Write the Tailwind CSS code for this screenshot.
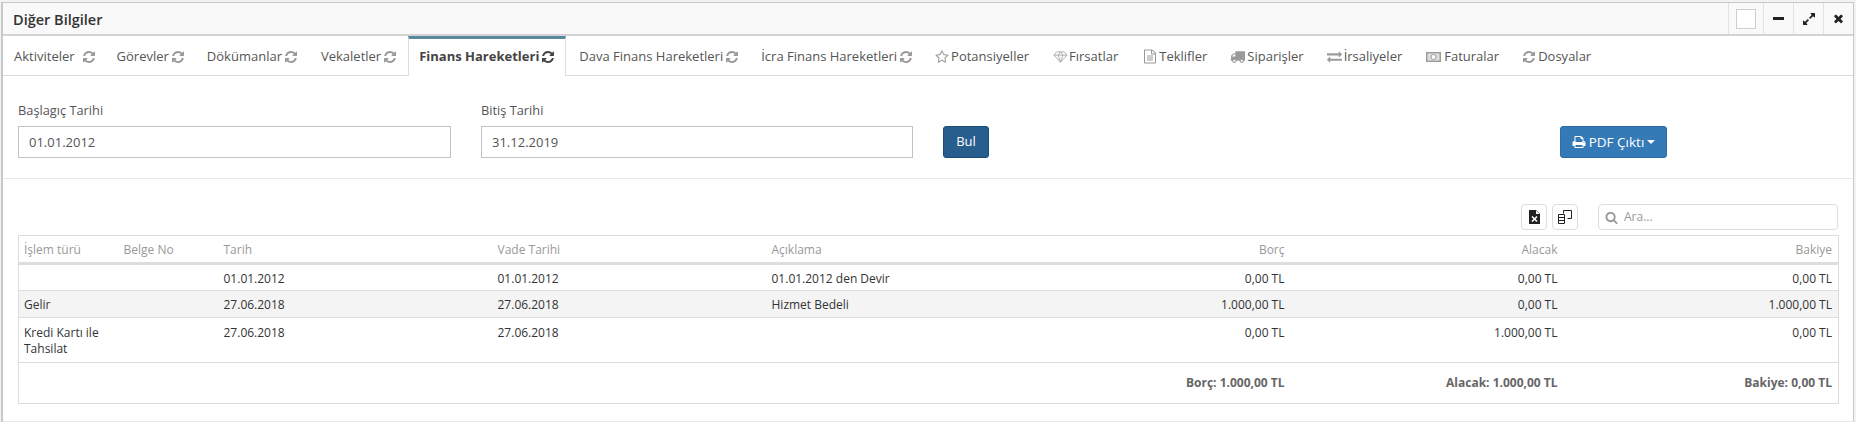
<!DOCTYPE html>
<html lang="en">

<head>
    <meta charset="UTF-8">
    <title>Diğer Bilgiler</title>
    <script src="https://cdn.jsdelivr.net/npm/@tailwindcss/browser@4"></script>
</head>

<body class="bg-[#f2f2f2] font-['Open_Sans',sans-serif] text-[13px] text-[#333] overflow-hidden">
    <svg class="hidden">
        <symbol id="refresh" viewBox="0 0 1792 1792"><path fill="currentColor" d="M1639 1056q0 5-1 7-64 268-268 434.5t-478 166.5q-146 0-282.5-55t-243.5-157l-129 129q-19 19-45 19t-45-19-19-45v-448q0-26 19-45t45-19h448q26 0 45 19t19 45-19 45l-137 137q71 66 161 102t187 36q134 0 250-65t186-179q11-17 53-117 8-23 30-23h192q13 0 22.5 9.5t9.5 22.5zm25-800v448q0 26-19 45t-45 19h-448q-26 0-45-19t-19-45 19-45l138-138q-148-137-349-137-134 0-250 65t-186 179q-11 17-53 117-8 23-30 23h-199q-13 0-22.5-9.5t-9.5-22.5v-7q65-268 270-434.5t480-166.5q146 0 284 55.5t245 156.5l130-129q19-19 45-19t45 19 19 45z"/></symbol>
    </svg>

    <div class="mt-[2px] ml-[1px] mr-[2px] h-[420px] bg-white border border-l-2 border-[#c9c9c9] border-b-0">
        <!-- title bar -->
        <div class="flex h-[33px] items-stretch justify-between bg-[#f9f9f9] border-b-2 border-[#d4d4d4]">
            <div class="pl-[10px] leading-[33px] text-[14.5px] font-semibold text-[#333]">Diğer Bilgiler</div>
            <div class="flex text-[#222]">
                <div class="flex w-[35px] items-center justify-center border-l border-[#e2e2e2]">
                    <div class="w-[20px] h-[20px] bg-white border border-[#cfcfcf]"></div>
                </div>
                <div class="flex w-[30px] items-center justify-center border-l border-[#e2e2e2]">
                    <div class="w-[11px] h-[3px] bg-[#222]"></div>
                </div>
                <div class="flex w-[30px] items-center justify-center border-l border-[#e2e2e2]">
                    <svg class="w-[14px] h-[14px]" viewBox="0 0 1792 1792"><path fill="currentColor" d="M883 1056q0 13-10 23l-332 332 144 144q19 19 19 45t-19 45-45 19h-448q-26 0-45-19t-19-45v-448q0-26 19-45t45-19 45 19l144 144 332-332q10-10 23-10t23 10l114 114q10 10 10 23zm781-864v448q0 26-19 45t-45 19-45-19l-144-144-332 332q-10 10-23 10t-23-10l-114-114q-10-10-10-23t10-23l332-332-144-144q-19-19-19-45t19-45 45-19h448q26 0 45 19t19 45z"/></svg>
                </div>
                <div class="flex w-[30px] items-center justify-center border-l border-[#e2e2e2]">
                    <svg class="w-[13px] h-[13px]" viewBox="0 0 1792 1792"><path fill="currentColor" d="M1490 1322q0 40-28 68l-136 136q-28 28-68 28t-68-28l-294-294-294 294q-28 28-68 28t-68-28l-136-136q-28-28-28-68t28-68l294-294-294-294q-28-28-28-68t28-68l136-136q28-28 68-28t68 28l294 294 294-294q28-28 68-28t68 28l136 136q28 28 28 68t-28 68l-294 294 294 294q28 28 28 68z"/></svg>
                </div>
            </div>
        </div>

        <!-- tabs -->
        <div class="flex h-[40px] items-stretch border-b border-[#ddd] text-[#555] text-[13px] whitespace-nowrap">
            <a class="flex items-center gap-[7px] pt-[2px] pl-[11px] pr-[10px]">Aktiviteler <svg class="w-[14px] h-[14px] text-[#9a9a9a]"><use href="#refresh"/></svg></a>
            <a class="flex items-center gap-[2px] pt-[2px] px-[11px]">Görevler <svg class="w-[14px] h-[14px] text-[#9a9a9a]"><use href="#refresh"/></svg></a>
            <a class="flex items-center gap-[2px] pt-[2px] pl-[11px] pr-[13px]">Dökümanlar <svg class="w-[14px] h-[14px] text-[#9a9a9a]"><use href="#refresh"/></svg></a>
            <a class="flex items-center gap-[2px] pt-[2px] pl-[10px] pr-[11px]">Vekaletler <svg class="w-[14px] h-[14px] text-[#9a9a9a]"><use href="#refresh"/></svg></a>
            <a class="flex items-center gap-[2px] px-[10px] pb-[1px] -mb-px bg-white border-x border-[#ddd] border-t-[3px] border-t-[#5b8a9e] font-bold text-[#444]">Finans Hareketleri <svg class="w-[14px] h-[14px] text-[#444]"><use href="#refresh"/></svg></a>
            <a class="flex items-center gap-[2px] pt-[2px] pl-[13px] pr-[11px]">Dava Finans Hareketleri <svg class="w-[14px] h-[14px] text-[#9a9a9a]"><use href="#refresh"/></svg></a>
            <a class="flex items-center gap-[2px] pt-[2px] pl-[11px] pr-[10px]">İcra Finans Hareketleri <svg class="w-[14px] h-[14px] text-[#9a9a9a]"><use href="#refresh"/></svg></a>
            <a class="flex items-center gap-[2px] pt-[2px] pl-[12px] pr-[10px]"><svg class="w-[14px] h-[14px] text-[#9a9a9a]" viewBox="0 0 1792 1792"><path fill="currentColor" d="M1201 1004l306-297-422-62-189-382-189 382-422 62 306 297-73 421 378-199 377 199zm527-357q0 22-26 48l-367 358 87 506q1 7 1 20 0 50-41 50-19 0-40-12l-454-239-454 239q-22 12-40 12-21 0-31.5-14.5t-10.5-35.5q0-6 2-20l87-506-368-358q-25-27-25-48 0-37 56-46l507-74 227-460q19-41 49-41t49 41l227 460 507 74q56 9 56 46z"/></svg>Potansiyeller</a>
            <a class="flex items-center gap-[1px] pt-[2px] pl-[14px] pr-[14px]"><svg class="w-[15px] h-[14px] text-[#aaa]" viewBox="0 0 16 14" fill="none" stroke="currentColor"><path d="M4 1.500h8l3 3.500-7 7.500L1 5zM1 5h14M5.500 5 8 12.500 10.500 5 8 1.500z"/></svg>Fırsatlar</a>
            <a class="flex items-center gap-[2px] pt-[2px] pl-[11px] pr-[12px]"><svg class="w-[14px] h-[15px] text-[#9a9a9a]" viewBox="0 0 1792 1792"><path fill="currentColor" d="M1596 380q28 28 48 76t20 88v1152q0 40-28 68t-68 28h-1344q-40 0-68-28t-28-68v-1600q0-40 28-68t68-28h896q40 0 88 20t76 48zm-444-244v376h376q-10-29-22-41l-313-313q-12-12-41-22zm384 1528v-1024h-416q-40 0-68-28t-28-68v-416h-768v1536h1280zm-1024-864q0-14 9-23t23-9h704q14 0 23 9t9 23v64q0 14-9 23t-23 9h-704q-14 0-23-9t-9-23v-64zm736 224q14 0 23 9t9 23v64q0 14-9 23t-23 9h-704q-14 0-23-9t-9-23v-64q0-14 9-23t23-9h704zm0 256q14 0 23 9t9 23v64q0 14-9 23t-23 9h-704q-14 0-23-9t-9-23v-64q0-14 9-23t23-9h704z"/></svg>Teklifler</a>
            <a class="flex items-center gap-[2px] pt-[2px] pl-[11px] pr-[12px]"><svg class="w-[15px] h-[15px] text-[#9a9a9a]" viewBox="0 0 1792 1792"><path fill="currentColor" d="M640 1408q0-52-38-90t-90-38-90 38-38 90 38 90 90 38 90-38 38-90zm-384-512h384v-256h-158q-13 0-22 9l-195 195q-9 9-9 22v30zm1280 512q0-52-38-90t-90-38-90 38-38 90 38 90 90 38 90-38 38-90zm256-1088v1024q0 15-4 26.500t-13.500 18.500-16.500 11.500-23.500 6-22.500 2-25.500 0-22.500-.5q0 106-75 181t-181 75-181-75-75-181h-384q0 106-75 181t-181 75-181-75-75-181h-64q-3 0-22.500.5t-25.500 0-22.500-2-23.500-6-16.500-11.500-13.500-18.500-4-26.500q0-26 19-45t45-19v-320q0-8-.5-35t0-38 2.500-34.500 6.500-37 14-30.500 22.500-30l198-198q19-19 50.500-32t58.500-13h160v-192q0-26 19-45t45-19h1024q26 0 45 19t19 45z"/></svg>Siparişler</a>
            <a class="flex items-center gap-[2px] pt-[2px] pl-[11px] pr-[12px]"><svg class="w-[15px] h-[15px] text-[#9a9a9a]" viewBox="0 0 1792 1792"><path fill="currentColor" d="M1792 1184v192q0 13-9.500 22.500t-22.500 9.500h-1376v192q0 13-9.500 22.500t-22.500 9.500q-12 0-24-10l-319-320q-9-9-9-22 0-14 9-23l320-320q9-9 23-9 13 0 22.500 9.500t9.500 22.500v192h1376q13 0 22.500 9.500t9.500 22.500zm0-544q0 14-9 23l-320 320q-9 9-23 9-13 0-22.500-9.500t-9.500-22.500v-192h-1376q-13 0-22.500-9.500t-9.500-22.500v-192q0-13 9.500-22.500t22.500-9.500h1376v-192q0-14 9-23t23-9q12 0 24 10l319 319q9 9 9 23z"/></svg>İrsaliyeler</a>
            <a class="flex items-center gap-[3px] pt-[2px] pl-[12px] pr-[12px]"><svg class="w-[15px] h-[12px] text-[#9a9a9a]" viewBox="0 0 15 12"><path fill="currentColor" fill-rule="evenodd" d="M0 1h15v10H0zM1.500 2.500v7h12v-7z"/><path fill="currentColor" fill-opacity=".35" d="M1.500 2.500h12v7h-12z"/><circle cx="7.500" cy="6" r="2.500" fill="#fff" stroke="currentColor"/></svg>Faturalar</a>
            <a class="flex items-center gap-[2px] pt-[2px] px-[11px]"><svg class="w-[14px] h-[14px] text-[#9a9a9a]"><use href="#refresh"/></svg>Dosyalar</a>
        </div>

        <!-- date filter -->
        <div class="flex h-[103px] items-start pt-[21px] pl-[15px] border-b border-[#e8e8e8]">
            <div class="w-[433px] shrink-0">
                <label class="block h-[29px] leading-[26px] text-[12.800px] text-[#555]">Başlagıç Tarihi</label>
                <input type="text" value="01.01.2012" class="block w-full h-[32px] px-[10px] border border-[#c2c2c2] text-[13px] text-[#555]">
            </div>
            <div class="w-[432px] shrink-0 ml-[30px]">
                <label class="block h-[29px] leading-[26px] text-[12.800px] text-[#555]">Bitiş Tarihi</label>
                <input type="text" value="31.12.2019" class="block w-full h-[32px] px-[10px] border border-[#c2c2c2] text-[13px] text-[#555]">
            </div>
            <button class="mt-[29px] ml-[30px] w-[46px] h-[32px] rounded-[3px] bg-[#285e8e] border border-[#204d74] text-white">Bul</button>
            <button class="mt-[29px] ml-[571px] flex items-center justify-center gap-[3px] w-[107px] h-[32px] rounded-[3px] bg-[#337ab7] border border-[#2e6da4] text-white text-[13.500px]">
                <svg class="w-[14px] h-[14px]" viewBox="0 0 1792 1792"><path fill="currentColor" d="M448 1536h896v-256h-896v256zm0-640h896v-384h-160q-40 0-68-28t-28-68v-160h-640v640zm1152 64q0-26-19-45t-45-19-45 19-19 45 19 45 45 19 45-19 19-45zm128 0v416q0 13-9.500 22.500t-22.500 9.500h-224v160q0 40-28 68t-68 28h-960q-40 0-68-28t-28-68v-160h-224q-13 0-22.500-9.500t-9.500-22.500v-416q0-79 56.500-135.500t135.500-56.500h64v-544q0-40 28-68t68-28h672q40 0 88 20t76 48l152 152q28 28 48 76t20 88v256h64q79 0 135.500 56.500t56.500 135.500z"/></svg>
                PDF Çıktı
                <span class="w-0 h-0 border-x-[4px] border-x-transparent border-t-[4px] border-t-white"></span>
            </button>
        </div>

        <!-- table area -->
        <div class="pl-[15px] pr-[15px] h-[243px] border-b border-[#e8e8e8]">
            <div class="flex justify-end items-start pt-[25px] h-[51px]">
                <button class="flex items-center justify-center w-[26px] h-[26px] rounded-[4px] border border-[#ddd] bg-white">
                    <svg class="w-[11px] h-[14px]" viewBox="0 0 11 14"><path fill="#222" d="M0 0h7l4 4v10H0z"/><path fill="#fff" d="M7 .5 10.500 4H7z"/><path stroke="#fff" stroke-width="1.600" d="M3 6.500l5 5M8 6.500l-5 5"/></svg>
                </button>
                <button class="flex items-center justify-center w-[26px] h-[26px] ml-[5px] rounded-[4px] border border-[#ddd] bg-white">
                    <svg class="w-[14px] h-[14px]" viewBox="0 0 14 14" fill="none" stroke="#222"><path d="M5.500 3.500v-3h8v8h-4"/><path fill="#fff" d="M.5 4.500h6v9h-6zM.5 7.500h6M.5 10.500h6"/></svg>
                </button>
                <div class="flex items-center gap-[6px] w-[240px] h-[26px] ml-[20px] px-[6px] rounded-[4px] border border-[#ddd] bg-white text-[12px] text-[#999]">
                    <svg class="w-[13px] h-[13px] text-[#999]" viewBox="0 0 1792 1792"><path fill="currentColor" d="M1216 832q0-185-131.500-316.500t-316.500-131.500-316.500 131.500-131.500 316.500 131.500 316.500 316.500 131.500 316.500-131.500 131.500-316.500zm512 832q0 52-38 90t-90 38q-54 0-90-38l-343-342q-179 124-399 124-143 0-273.500-55.500t-225-150-150-225-55.500-273.500 55.500-273.500 150-225 225-150 273.500-55.500 273.500 55.500 225 150 150 225 55.500 273.500q0 220-124 399l343 343q37 37 37 90z"/></svg>
                    Ara...
                </div>
            </div>
            <table class="mt-[5px] w-[1820px] table-fixed border-collapse border border-[#ddd] text-[12px] leading-[16px] text-[#333]">
                <colgroup>
                    <col class="w-[100px]"><col class="w-[100px]"><col class="w-[274px]"><col class="w-[274px]"><col class="w-[252px]"><col class="w-[271px]"><col class="w-[273px]"><col class="w-[276px]">
                </colgroup>
                <thead class="text-[#999]">
                    <tr class="h-[28px] border-b-[3px] border-[#ddd] *:pt-[2px]">
                        <th class="px-[5px] text-left font-normal">İşlem türü</th>
                        <th class="px-[5px] text-left font-normal">Belge No</th>
                        <th class="px-[5px] text-left font-normal">Tarih</th>
                        <th class="px-[5px] text-left font-normal">Vade Tarihi</th>
                        <th class="px-[5px] text-left font-normal">Açıklama</th>
                        <th class="px-[5px] text-right font-normal">Borç</th>
                        <th class="px-[5px] text-right font-normal">Alacak</th>
                        <th class="pl-[5px] pr-[6px] text-right font-normal">Bakiye</th>
                    </tr>
                </thead>
                <tbody>
                    <tr class="h-[27px] border-b border-[#ddd] *:pt-[2px]">
                        <td class="px-[5px]"></td><td class="px-[5px]"></td>
                        <td class="px-[5px]">01.01.2012</td><td class="px-[5px]">01.01.2012</td><td class="px-[5px]">01.01.2012 den Devir</td>
                        <td class="px-[5px] text-right">0,00 TL</td><td class="px-[5px] text-right">0,00 TL</td><td class="pl-[5px] pr-[6px] text-right">0,00 TL</td>
                    </tr>
                    <tr class="h-[27px] border-b border-[#ddd] bg-[#f4f4f4] *:pt-[2px]">
                        <td class="px-[5px]">Gelir</td><td class="px-[5px]"></td>
                        <td class="px-[5px]">27.06.2018</td><td class="px-[5px]">27.06.2018</td><td class="px-[5px]">Hizmet Bedeli</td>
                        <td class="px-[5px] text-right">1.000,00 TL</td><td class="px-[5px] text-right">0,00 TL</td><td class="pl-[5px] pr-[6px] text-right">1.000,00 TL</td>
                    </tr>
                    <tr class="border-b border-[#ddd] align-top">
                        <td class="px-[5px] pt-[7px] pb-[5px]">Kredi Kartı ile Tahsilat</td><td class="px-[5px]"></td>
                        <td class="px-[5px] pt-[7px]">27.06.2018</td><td class="px-[5px] pt-[7px]">27.06.2018</td><td class="px-[5px]"></td>
                        <td class="px-[5px] pt-[7px] text-right">0,00 TL</td><td class="px-[5px] pt-[7px] text-right">1.000,00 TL</td><td class="pl-[5px] pr-[6px] pt-[7px] text-right">0,00 TL</td>
                    </tr>
                </tbody>
                <tfoot class="font-bold text-[#666]">
                    <tr class="h-[41px]">
                        <td colspan="5"></td>
                        <td class="px-[5px] text-right">Borç: 1.000,00 TL</td>
                        <td class="px-[5px] text-right">Alacak: 1.000,00 TL</td>
                        <td class="pl-[5px] pr-[6px] text-right">Bakiye: 0,00 TL</td>
                    </tr>
                </tfoot>
            </table>
        </div>
    </div>
</body>

</html>
